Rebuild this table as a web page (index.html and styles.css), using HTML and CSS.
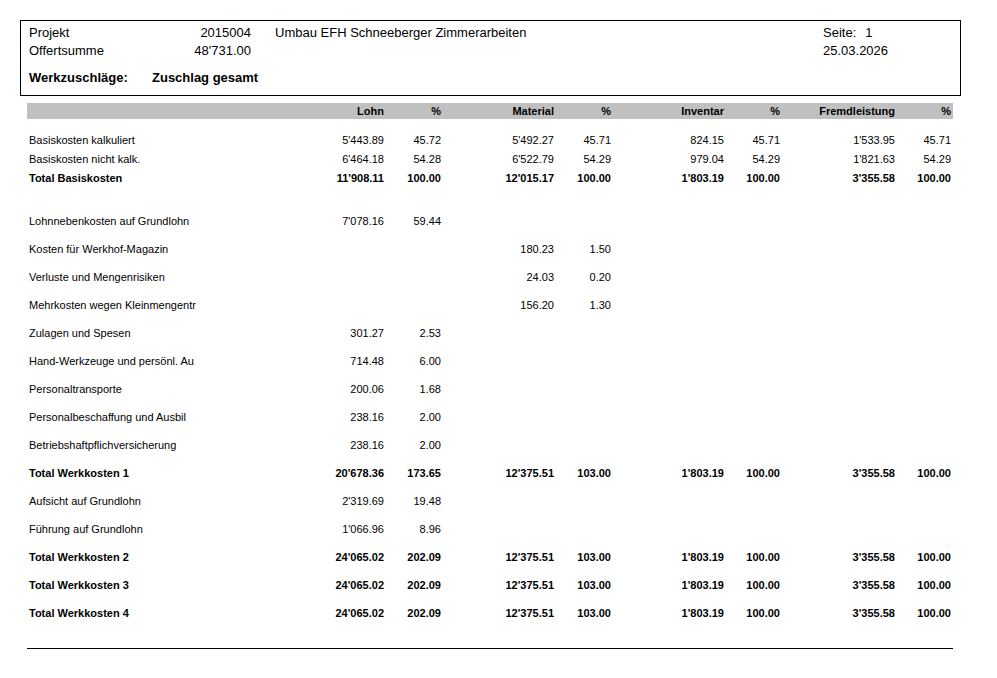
FILE: index.html
```html
<!DOCTYPE html>
<html lang="de">
<head>
<meta charset="utf-8">
<title>Werkzuschläge</title>
<link rel="stylesheet" href="styles.css">
</head>
<body>
<div class="page">
  <div class="head-box">
    <div class="head-grid">
      <div class="h-label">Projekt</div>
      <div class="h-num">2015004</div>
      <div class="h-desc">Umbau EFH Schneeberger Zimmerarbeiten</div>
      <div class="h-right">Seite:<span class="page-no">1</span></div>
      <div class="h-label">Offertsumme</div>
      <div class="h-num">48'731.00</div>
      <div class="h-desc"></div>
      <div class="h-right">25.03.2026</div>
    </div>
    <div class="head-sub">
      <div class="sub-label">Werkzuschläge:</div>
      <div class="sub-value">Zuschlag gesamt</div>
    </div>
  </div>

  <div class="report">
    <div class="row hdr">
      <div class="lbl"></div>
      <div class="num">Lohn</div><div class="num">%</div>
      <div class="num">Material</div><div class="num">%</div>
      <div class="num">Inventar</div><div class="num">%</div>
      <div class="num">Fremdleistung</div><div class="num">%</div>
    </div>

    <div class="section basis">
      <div class="row">
        <div class="lbl">Basiskosten kalkuliert</div>
        <div class="num">5'443.89</div><div class="num">45.72</div>
        <div class="num">5'492.27</div><div class="num">45.71</div>
        <div class="num">824.15</div><div class="num">45.71</div>
        <div class="num">1'533.95</div><div class="num">45.71</div>
      </div>
      <div class="row">
        <div class="lbl">Basiskosten nicht kalk.</div>
        <div class="num">6'464.18</div><div class="num">54.28</div>
        <div class="num">6'522.79</div><div class="num">54.29</div>
        <div class="num">979.04</div><div class="num">54.29</div>
        <div class="num">1'821.63</div><div class="num">54.29</div>
      </div>
      <div class="row total">
        <div class="lbl">Total Basiskosten</div>
        <div class="num">11'908.11</div><div class="num">100.00</div>
        <div class="num">12'015.17</div><div class="num">100.00</div>
        <div class="num">1'803.19</div><div class="num">100.00</div>
        <div class="num">3'355.58</div><div class="num">100.00</div>
      </div>
    </div>

    <div class="section costs">
      <div class="row">
        <div class="lbl">Lohnnebenkosten auf Grundlohn</div>
        <div class="num">7'078.16</div><div class="num">59.44</div>
      </div>
      <div class="row">
        <div class="lbl">Kosten für Werkhof-Magazin</div>
        <div class="num"></div><div class="num"></div>
        <div class="num">180.23</div><div class="num">1.50</div>
      </div>
      <div class="row">
        <div class="lbl">Verluste und Mengenrisiken</div>
        <div class="num"></div><div class="num"></div>
        <div class="num">24.03</div><div class="num">0.20</div>
      </div>
      <div class="row">
        <div class="lbl">Mehrkosten wegen Kleinmengentr</div>
        <div class="num"></div><div class="num"></div>
        <div class="num">156.20</div><div class="num">1.30</div>
      </div>
      <div class="row">
        <div class="lbl">Zulagen und Spesen</div>
        <div class="num">301.27</div><div class="num">2.53</div>
      </div>
      <div class="row">
        <div class="lbl">Hand-Werkzeuge und persönl. Au</div>
        <div class="num">714.48</div><div class="num">6.00</div>
      </div>
      <div class="row">
        <div class="lbl">Personaltransporte</div>
        <div class="num">200.06</div><div class="num">1.68</div>
      </div>
      <div class="row">
        <div class="lbl">Personalbeschaffung und Ausbil</div>
        <div class="num">238.16</div><div class="num">2.00</div>
      </div>
      <div class="row">
        <div class="lbl">Betriebshaftpflichversicherung</div>
        <div class="num">238.16</div><div class="num">2.00</div>
      </div>
      <div class="row total">
        <div class="lbl">Total Werkkosten 1</div>
        <div class="num">20'678.36</div><div class="num">173.65</div>
        <div class="num">12'375.51</div><div class="num">103.00</div>
        <div class="num">1'803.19</div><div class="num">100.00</div>
        <div class="num">3'355.58</div><div class="num">100.00</div>
      </div>
      <div class="row">
        <div class="lbl">Aufsicht auf Grundlohn</div>
        <div class="num">2'319.69</div><div class="num">19.48</div>
      </div>
      <div class="row">
        <div class="lbl">Führung auf Grundlohn</div>
        <div class="num">1'066.96</div><div class="num">8.96</div>
      </div>
      <div class="row total">
        <div class="lbl">Total Werkkosten 2</div>
        <div class="num">24'065.02</div><div class="num">202.09</div>
        <div class="num">12'375.51</div><div class="num">103.00</div>
        <div class="num">1'803.19</div><div class="num">100.00</div>
        <div class="num">3'355.58</div><div class="num">100.00</div>
      </div>
      <div class="row total">
        <div class="lbl">Total Werkkosten 3</div>
        <div class="num">24'065.02</div><div class="num">202.09</div>
        <div class="num">12'375.51</div><div class="num">103.00</div>
        <div class="num">1'803.19</div><div class="num">100.00</div>
        <div class="num">3'355.58</div><div class="num">100.00</div>
      </div>
      <div class="row total">
        <div class="lbl">Total Werkkosten 4</div>
        <div class="num">24'065.02</div><div class="num">202.09</div>
        <div class="num">12'375.51</div><div class="num">103.00</div>
        <div class="num">1'803.19</div><div class="num">100.00</div>
        <div class="num">3'355.58</div><div class="num">100.00</div>
      </div>
    </div>
  </div>

  <div class="rule"></div>
</div>
</body>
</html>
```

FILE: styles.css
```css
* { box-sizing: border-box; }

html, body {
  margin: 0;
  padding: 0;
  background: #ffffff;
}

body {
  font-family: "Liberation Sans", Arial, sans-serif;
  color: #000000;
}

.page {
  width: 997px;
  padding-top: 20px;
}

.head-box {
  margin-left: 20px;
  width: 941px;
  border: 1px solid #000000;
  padding: 3px 0 8px 8px;
  font-size: 13px;
}

.head-grid {
  display: grid;
  grid-template-columns: 120px 102px 548px 1fr;
  column-gap: 0;
  line-height: 18px;
}

.h-num {
  text-align: right;
}

.h-desc {
  padding-left: 24px;
}

.h-right {
  padding-left: 24px;
  white-space: nowrap;
}

.page-no {
  margin-left: 9px;
}

.head-sub {
  display: flex;
  margin-top: 9px;
  line-height: 18px;
  font-weight: bold;
}

.sub-label {
  width: 123px;
}

.report {
  margin-left: 27px;
  margin-top: 7px;
  width: 926px;
  font-size: 11px;
}

.row {
  display: grid;
  grid-template-columns: 298px 57px 57px 113px 57px 113px 56px 115px 56px;
  padding: 0 2px;
  white-space: nowrap;
}

.row .num {
  text-align: right;
}

.row.total {
  font-weight: bold;
}

.hdr {
  background: #c0c0c0;
  line-height: 16px;
  font-weight: bold;
}

.basis {
  margin-top: 12px;
}

.basis .row {
  line-height: 19px;
}

.costs {
  margin-top: 19px;
}

.costs .row {
  line-height: 28px;
}

.rule {
  margin-left: 27px;
  margin-top: 21px;
  width: 926px;
  height: 1px;
  background: #000000;
}
```
